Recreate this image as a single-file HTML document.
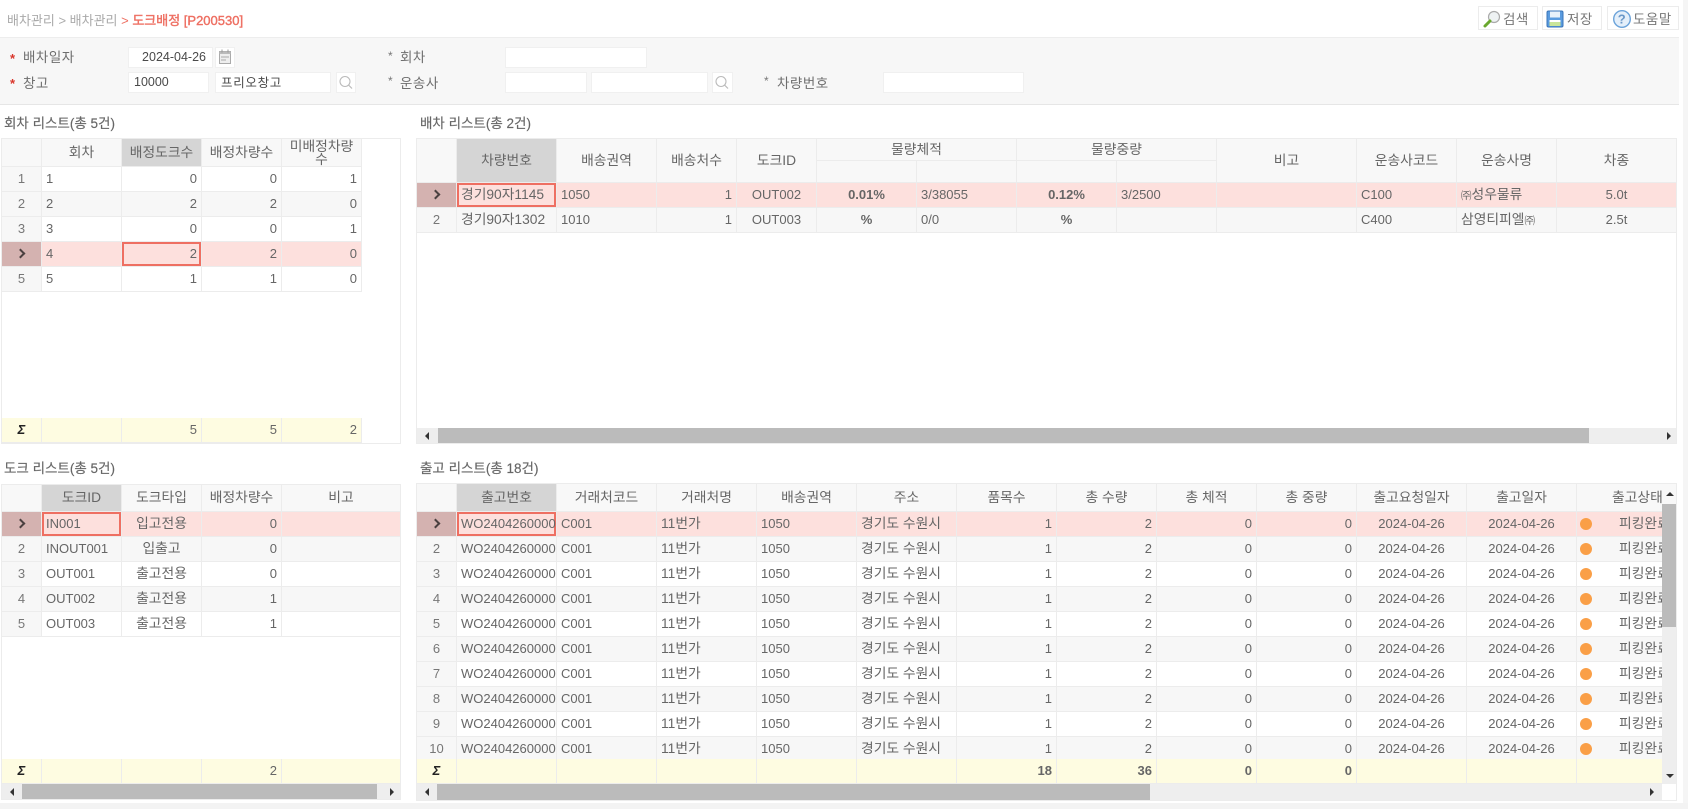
<!DOCTYPE html>
<html lang="ko"><head><meta charset="utf-8"><title>도크배정</title>
<style>
html,body{margin:0;padding:0;width:1688px;height:809px;overflow:hidden;background:#fff}
*{box-sizing:border-box}
body{font-family:"Liberation Sans","Noto Sans CJK KR",sans-serif;font-size:13px;color:#666;position:relative}
.a{position:absolute;white-space:nowrap}
.btn{position:absolute;top:6px;height:24px;border:1px solid #ececec;background:#fff;line-height:22px;color:#777;font-size:13.5px;letter-spacing:.5px}
.btn svg{position:absolute;top:2px}
.btn span{position:absolute;top:2px}
.in{position:absolute;height:21px;background:#fff;border:1px solid #f0f0f0;line-height:19px;padding:0 5px;color:#4a4a4a;font-size:12.5px}
.ib{position:absolute;height:21px;background:#fff;border:1px solid #f0f0f0}
.lb{position:absolute;font-size:13.5px;line-height:18px;color:#6e6e6e;letter-spacing:.5px}
.st{position:absolute;color:#d9362b;font-size:13px;font-weight:700;line-height:18px}
.dt{position:absolute;color:#777;font-size:12px;line-height:18px}
.ttl{position:absolute;font-size:13.5px;line-height:18px;color:#666;-webkit-text-stroke:.15px #666}
.g{position:absolute;background:#fff;border:1px solid #ececec;overflow:hidden}
table{table-layout:fixed;border-collapse:separate;border-spacing:0;position:absolute;left:0;top:0;font-size:13px}
td,th{padding:0 4px;overflow:hidden;white-space:nowrap;border-right:1px solid #ececec;border-bottom:1px solid #ececec;height:25px;font-weight:400;color:#666;line-height:16px}
th{background:#f8f8f8;color:#666;text-align:center;font-size:13.8px}
th.s{background:#d5d5d5}
td.h{background:#f7f7f7;text-align:center;color:#777}
td.r{text-align:right}td.c{text-align:center}
td.k{font-size:13.8px}
td b{color:#666}
small{font-size:10.5px}
tr.e td{background:#f7f7f7}
tr.sel td{background:#fde0dd}
tr.sel td.h{background:#d4b2b0;padding:0}
tr.sum td{background:#fefce1;font-weight:400;height:25px}
tr.sum td.h{background:#fefce1;color:#222;font-weight:700;font-style:italic}
tr.sum td.b{font-weight:700}
td.x,tr.sel td.x{box-shadow:inset 0 0 0 2px #ee6f62}
.sb{position:absolute;background:#eee}
.th{position:absolute;background:#bbb}
.ar{position:absolute;width:0;height:0}
.l{border-top:4px solid transparent;border-bottom:4px solid transparent;border-right:4px solid #333}
.rr{border-top:4px solid transparent;border-bottom:4px solid transparent;border-left:4px solid #333}
.u{border-left:4px solid transparent;border-right:4px solid transparent;border-bottom:4px solid #333}
.d{border-left:4px solid transparent;border-right:4px solid transparent;border-top:4px solid #333}
.dot{position:absolute;width:12px;height:12px;border-radius:50%;background:#fa9f47;left:1163px}
.cv{display:inline-block;width:7px;height:7px;border-top:2px solid #4a4040;border-right:2px solid #4a4040;transform:rotate(45deg);margin-left:-3px;vertical-align:1px}
</style></head><body>

<div class="a" style="left:7px;top:12px;font-size:13px;line-height:17px;color:#aaa">배차관리 &gt; 배차관리 <span style="color:#ee6f62">&gt; <span style="-webkit-text-stroke:.4px #ee6f62">도크배정 [P200530]</span></span></div>

<div class="btn" style="left:1478px;width:60px"><svg width="20" height="20" viewBox="0 0 20 20" style="left:3px"><circle cx="12" cy="8" r="5.5" fill="#eef2f3" stroke="#aaa" stroke-width="1.2"/><path d="M8 12 3 17" stroke="#6aa82e" stroke-width="3" stroke-linecap="round"/></svg><span style="left:24px">검색</span></div>
<div class="btn" style="left:1542px;width:60px"><svg width="18" height="18" viewBox="0 0 18 18" style="left:3px;top:3px"><rect x="1" y="1" width="16" height="16" rx="1.5" fill="#5a9bdf" stroke="#3a74b8"/><rect x="4" y="1.5" width="10" height="6" fill="#e8f1fa"/><rect x="3.5" y="10" width="11" height="6" fill="#c9e59a"/><rect x="3.5" y="10" width="11" height="2" fill="#fff"/></svg><span style="left:24px">저장</span></div>
<div class="btn" style="left:1607px;width:72px"><svg width="20" height="20" viewBox="0 0 20 20" style="left:4px;top:2px"><circle cx="10" cy="10" r="8.3" fill="#e4effa" stroke="#6ba3da" stroke-width="1.4"/><text x="10" y="14.5" font-size="13" font-weight="700" text-anchor="middle" fill="#6a98c8" font-family="Liberation Sans">?</text></svg><span style="left:25px">도움말</span></div>

<div class="a" style="left:0;top:37px;width:1679px;height:68px;background:#f7f7f7;border-top:1px solid #ededed;border-bottom:1px solid #e6e6e6"></div>
<div class="a" style="left:1683px;top:0;width:5px;height:809px;background:#f5f5f5"></div>
<div class="a" style="left:0;top:803px;width:1688px;height:6px;background:#f3f3f3"></div>

<div class="st" style="left:10px;top:50px">*</div><div class="lb" style="left:23px;top:49px">배차일자</div>
<div class="st" style="left:10px;top:75px">*</div><div class="lb" style="left:23px;top:75px">창고</div>
<div class="in" style="left:128px;top:47px;width:85px;text-align:right;padding-right:6px">2024-04-26</div>
<div class="ib" style="left:215px;top:47px;width:20px"><svg width="18" height="19" viewBox="0 0 18 19"><rect x="3.5" y="3.5" width="11" height="12" fill="#eee" stroke="#aaa"/><rect x="3.5" y="3.5" width="11" height="2.5" fill="#bbb"/><path d="M5 9h8M5 12h5" stroke="#aaa"/><path d="M6 1.5v3M12 1.5v3" stroke="#999"/></svg></div>
<div class="in" style="left:128px;top:72px;width:81px;">10000</div>
<div class="in" style="left:215px;top:72px;width:116px;letter-spacing:.7px;line-height:20px">프리오창고</div>
<div class="ib" style="left:336px;top:72px;width:20px"><svg width="18" height="19" viewBox="0 0 18 19"><circle cx="8" cy="8.5" r="5" fill="none" stroke="#bbb" stroke-width="1.1"/><path d="M11.5 12l3.5 3.5" stroke="#bbb" stroke-width="1.2"/></svg></div>

<div class="dt" style="left:388px;top:47px">*</div><div class="lb" style="left:400px;top:49px">회차</div>
<div class="dt" style="left:388px;top:72px">*</div><div class="lb" style="left:400px;top:75px">운송사</div>
<div class="in" style="left:505px;top:47px;width:142px"></div>
<div class="in" style="left:505px;top:72px;width:82px"></div>
<div class="in" style="left:591px;top:72px;width:117px"></div>
<div class="ib" style="left:712px;top:72px;width:21px"><svg width="18" height="19" viewBox="0 0 18 19"><circle cx="8" cy="8.5" r="5" fill="none" stroke="#bbb" stroke-width="1.1"/><path d="M11.5 12l3.5 3.5" stroke="#bbb" stroke-width="1.2"/></svg></div>
<div class="dt" style="left:764px;top:72px">*</div><div class="lb" style="left:777px;top:75px">차량번호</div>
<div class="in" style="left:883px;top:72px;width:141px"></div>

<div class="ttl" style="left:4px;top:115px">회차 리스트(총 5건)</div>
<div class="ttl" style="left:420px;top:115px">배차 리스트(총 2건)</div>
<div class="ttl" style="left:4px;top:460px">도크 리스트(총 5건)</div>
<div class="ttl" style="left:420px;top:460px">출고 리스트(총 18건)</div>

<!-- 회차 -->
<div class="g" style="left:1px;top:138px;width:400px;height:306px">
<table style="width:360px"><colgroup><col width="40"><col width="80"><col width="80"><col width="80"><col width="80"></colgroup>
<tr><th style="height:28px"></th><th style="height:28px">회차</th><th class="s" style="height:28px">배정도크수</th><th style="height:28px">배정차량수</th><th style="height:28px;padding:0;line-height:13px">미배정차량<br>수</th></tr>
<tr><td class="h">1</td><td>1</td><td class="r">0</td><td class="r">0</td><td class="r">1</td></tr>
<tr class="e"><td class="h">2</td><td>2</td><td class="r">2</td><td class="r">2</td><td class="r">0</td></tr>
<tr><td class="h">3</td><td>3</td><td class="r">0</td><td class="r">0</td><td class="r">1</td></tr>
<tr class="sel"><td class="h"><i class="cv"></i></td><td>4</td><td class="r x">2</td><td class="r">2</td><td class="r">0</td></tr>
<tr><td class="h">5</td><td>5</td><td class="r">1</td><td class="r">1</td><td class="r">0</td></tr>
</table>
<table style="width:360px;top:279px"><colgroup><col width="40"><col width="80"><col width="80"><col width="80"><col width="80"></colgroup>
<tr class="sum"><td class="h">Σ</td><td></td><td class="r">5</td><td class="r">5</td><td class="r">2</td></tr></table>
</div>

<!-- 배차 -->
<div class="g" style="left:416px;top:138px;width:1261px;height:306px">
<table style="width:1260px"><colgroup><col width="40"><col width="100"><col width="100"><col width="80"><col width="80"><col width="100"><col width="100"><col width="100"><col width="100"><col width="140"><col width="100"><col width="100"><col width="120"></colgroup>
<tr><th rowspan="2"></th><th rowspan="2" class="s">차량번호</th><th rowspan="2">배송권역</th><th rowspan="2">배송처수</th><th rowspan="2">도크ID</th><th colspan="2" style="height:22px">물량체적</th><th colspan="2" style="height:22px">물량중량</th><th rowspan="2">비고</th><th rowspan="2">운송사코드</th><th rowspan="2">운송사명</th><th rowspan="2">차종</th></tr>
<tr><th style="height:22px"></th><th style="height:22px"></th><th style="height:22px"></th><th style="height:22px"></th></tr>
<tr class="sel"><td class="h"><i class="cv"></i></td><td class="x k">경기90자1145</td><td>1050</td><td class="r">1</td><td class="c">OUT002</td><td class="c"><b>0.01%</b></td><td>3/38055</td><td class="c"><b>0.12%</b></td><td>3/2500</td><td></td><td>C100</td><td class="k"><small>㈜</small>성우물류</td><td class="c">5.0t</td></tr>
<tr class="e"><td class="h">2</td><td class="k">경기90자1302</td><td>1010</td><td class="r">1</td><td class="c">OUT003</td><td class="c"><b>%</b></td><td>0/0</td><td class="c"><b>%</b></td><td></td><td></td><td>C400</td><td class="k">삼영티피엘<small>㈜</small></td><td class="c">2.5t</td></tr>
</table>
<div class="sb" style="left:0;top:289px;width:1260px;height:16px"></div>
<div class="ar l" style="left:8px;top:293px"></div>
<div class="th" style="left:21px;top:289px;width:1151px;height:16px"></div>
<div class="ar rr" style="left:1250px;top:293px"></div>
</div>

<!-- 도크 -->
<div class="g" style="left:1px;top:484px;width:400px;height:316px">
<table style="width:399px"><colgroup><col width="40"><col width="80"><col width="80"><col width="80"><col width="119"></colgroup>
<tr><th style="height:27px"></th><th class="s" style="height:27px">도크ID</th><th style="height:27px">도크타입</th><th style="height:27px">배정차량수</th><th style="height:27px">비고</th></tr>
<tr class="sel"><td class="h"><i class="cv"></i></td><td class="x">IN001</td><td class="c k">입고전용</td><td class="r">0</td><td></td></tr>
<tr class="e"><td class="h">2</td><td>INOUT001</td><td class="c k">입출고</td><td class="r">0</td><td></td></tr>
<tr><td class="h">3</td><td>OUT001</td><td class="c k">출고전용</td><td class="r">0</td><td></td></tr>
<tr class="e"><td class="h">4</td><td>OUT002</td><td class="c k">출고전용</td><td class="r">1</td><td></td></tr>
<tr><td class="h">5</td><td>OUT003</td><td class="c k">출고전용</td><td class="r">1</td><td></td></tr>
</table>
<table style="width:399px;top:274px"><colgroup><col width="40"><col width="80"><col width="80"><col width="80"><col width="119"></colgroup>
<tr class="sum"><td class="h">Σ</td><td></td><td></td><td class="r">2</td><td></td></tr></table>
<div class="sb" style="left:0;top:299px;width:399px;height:16px"></div>
<div class="ar l" style="left:8px;top:303px"></div>
<div class="th" style="left:20px;top:299px;width:355px;height:16px"></div>
<div class="ar rr" style="left:388px;top:303px"></div>
</div>

<!-- 출고 -->
<div class="g" style="left:416px;top:483px;width:1261px;height:318px">
<table style="width:1280px"><colgroup><col width="40"><col width="100"><col width="100"><col width="100"><col width="100"><col width="100"><col width="100"><col width="100"><col width="100"><col width="100"><col width="110"><col width="110"><col width="120"></colgroup>
<tr><th style="height:28px"></th><th class="s" style="height:28px">출고번호</th><th style="height:28px">거래처코드</th><th style="height:28px">거래처명</th><th style="height:28px">배송권역</th><th style="height:28px">주소</th><th style="height:28px">품목수</th><th style="height:28px">총 수량</th><th style="height:28px">총 체적</th><th style="height:28px">총 중량</th><th style="height:28px">출고요청일자</th><th style="height:28px">출고일자</th><th style="height:28px;text-align:left;padding-left:35px">출고상태</th></tr>
<tr class="sel"><td class="h"><i class="cv"></i></td><td class="x" style="padding-right:0">WO2404260000</td><td>C001</td><td class="k">11번가</td><td>1050</td><td class="k">경기도 수원시</td><td class="r">1</td><td class="r">2</td><td class="r">0</td><td class="r">0</td><td class="c">2024-04-26</td><td class="c">2024-04-26</td><td class="k" style="padding-left:42px">피킹완료</td></tr>
<tr class="e"><td class="h">2</td><td style="padding-right:0">WO24042600002</td><td>C001</td><td class="k">11번가</td><td>1050</td><td class="k">경기도 수원시</td><td class="r">1</td><td class="r">2</td><td class="r">0</td><td class="r">0</td><td class="c">2024-04-26</td><td class="c">2024-04-26</td><td class="k" style="padding-left:42px">피킹완료</td></tr>
<tr><td class="h">3</td><td style="padding-right:0">WO24042600002</td><td>C001</td><td class="k">11번가</td><td>1050</td><td class="k">경기도 수원시</td><td class="r">1</td><td class="r">2</td><td class="r">0</td><td class="r">0</td><td class="c">2024-04-26</td><td class="c">2024-04-26</td><td class="k" style="padding-left:42px">피킹완료</td></tr>
<tr class="e"><td class="h">4</td><td style="padding-right:0">WO24042600002</td><td>C001</td><td class="k">11번가</td><td>1050</td><td class="k">경기도 수원시</td><td class="r">1</td><td class="r">2</td><td class="r">0</td><td class="r">0</td><td class="c">2024-04-26</td><td class="c">2024-04-26</td><td class="k" style="padding-left:42px">피킹완료</td></tr>
<tr><td class="h">5</td><td style="padding-right:0">WO24042600002</td><td>C001</td><td class="k">11번가</td><td>1050</td><td class="k">경기도 수원시</td><td class="r">1</td><td class="r">2</td><td class="r">0</td><td class="r">0</td><td class="c">2024-04-26</td><td class="c">2024-04-26</td><td class="k" style="padding-left:42px">피킹완료</td></tr>
<tr class="e"><td class="h">6</td><td style="padding-right:0">WO24042600002</td><td>C001</td><td class="k">11번가</td><td>1050</td><td class="k">경기도 수원시</td><td class="r">1</td><td class="r">2</td><td class="r">0</td><td class="r">0</td><td class="c">2024-04-26</td><td class="c">2024-04-26</td><td class="k" style="padding-left:42px">피킹완료</td></tr>
<tr><td class="h">7</td><td style="padding-right:0">WO24042600002</td><td>C001</td><td class="k">11번가</td><td>1050</td><td class="k">경기도 수원시</td><td class="r">1</td><td class="r">2</td><td class="r">0</td><td class="r">0</td><td class="c">2024-04-26</td><td class="c">2024-04-26</td><td class="k" style="padding-left:42px">피킹완료</td></tr>
<tr class="e"><td class="h">8</td><td style="padding-right:0">WO24042600002</td><td>C001</td><td class="k">11번가</td><td>1050</td><td class="k">경기도 수원시</td><td class="r">1</td><td class="r">2</td><td class="r">0</td><td class="r">0</td><td class="c">2024-04-26</td><td class="c">2024-04-26</td><td class="k" style="padding-left:42px">피킹완료</td></tr>
<tr><td class="h">9</td><td style="padding-right:0">WO24042600002</td><td>C001</td><td class="k">11번가</td><td>1050</td><td class="k">경기도 수원시</td><td class="r">1</td><td class="r">2</td><td class="r">0</td><td class="r">0</td><td class="c">2024-04-26</td><td class="c">2024-04-26</td><td class="k" style="padding-left:42px">피킹완료</td></tr>
<tr class="e"><td class="h">10</td><td style="padding-right:0">WO24042600002</td><td>C001</td><td class="k">11번가</td><td>1050</td><td class="k">경기도 수원시</td><td class="r">1</td><td class="r">2</td><td class="r">0</td><td class="r">0</td><td class="c">2024-04-26</td><td class="c">2024-04-26</td><td class="k" style="padding-left:42px">피킹완료</td></tr>
</table>
<table style="width:1280px;top:275px"><colgroup><col width="40"><col width="100"><col width="100"><col width="100"><col width="100"><col width="100"><col width="100"><col width="100"><col width="100"><col width="100"><col width="110"><col width="110"><col width="120"></colgroup>
<tr class="sum"><td class="h">Σ</td><td></td><td></td><td></td><td></td><td></td><td class="r b">18</td><td class="r b">36</td><td class="r b">0</td><td class="r b">0</td><td></td><td></td><td></td></tr></table>
<i class="dot" style="top:34px"></i><i class="dot" style="top:59px"></i><i class="dot" style="top:84px"></i><i class="dot" style="top:109px"></i><i class="dot" style="top:134px"></i><i class="dot" style="top:159px"></i><i class="dot" style="top:184px"></i><i class="dot" style="top:209px"></i><i class="dot" style="top:234px"></i><i class="dot" style="top:259px"></i>
<div class="sb" style="left:1245px;top:0;width:15px;height:300px;background:#eee"></div>
<div class="a" style="left:1245px;top:0;width:15px;height:28px;background:#f8f8f8"></div>
<div class="ar u" style="left:1249px;top:8px"></div>
<div class="th" style="left:1245px;top:20px;width:14px;height:123px"></div>
<div class="ar d" style="left:1249px;top:290px"></div>
<div class="sb" style="left:0;top:300px;width:1245px;height:16px"></div>
<div class="ar l" style="left:8px;top:304px"></div>
<div class="th" style="left:20px;top:300px;width:713px;height:16px"></div>
<div class="ar rr" style="left:1233px;top:304px"></div>
</div>

</body></html>
